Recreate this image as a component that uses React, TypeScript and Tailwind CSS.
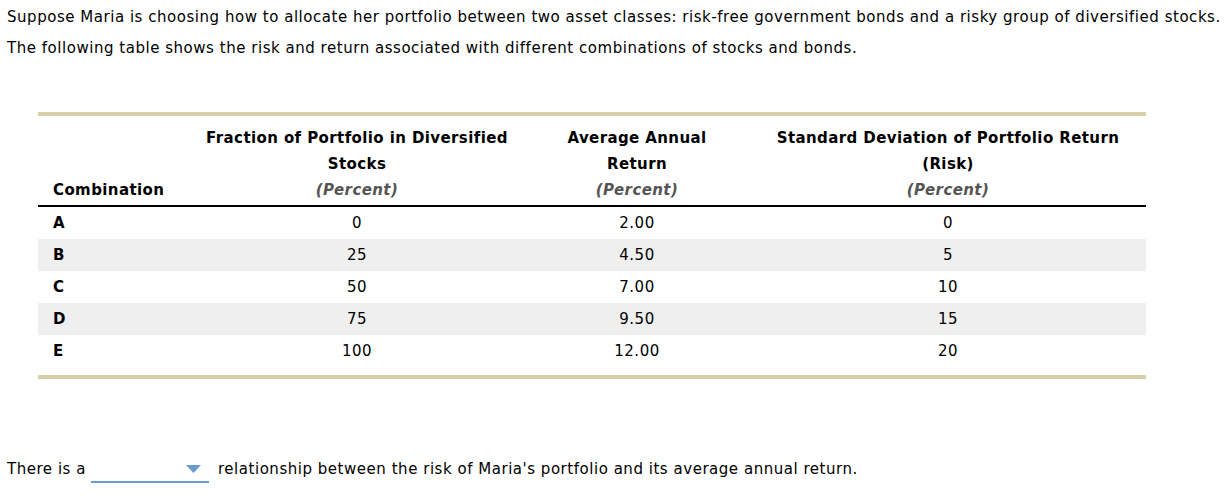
import React from "react";

const rows = [
  ["A", "0", "2.00", "0"],
  ["B", "25", "4.50", "5"],
  ["C", "50", "7.00", "10"],
  ["D", "75", "9.50", "15"],
  ["E", "100", "12.00", "20"],
];

export default function App() {
  return (
    <div className="w-[1228px] h-[496px] bg-white text-black text-[15px] tracking-[0.53px] font-['DejaVu_Sans',Verdana,sans-serif] relative">
      <div className="pl-[7px] pt-[7px]">
        <p className="leading-[20px] h-[20px] whitespace-nowrap">
          Suppose Maria is choosing how to allocate her portfolio between two asset classes: risk-free government bonds and a risky group of diversified stocks.
        </p>
        <p className="leading-[20px] mt-[11px]">
          The following table shows the risk and return associated with different combinations of stocks and bonds.
        </p>
      </div>
      <div className="ml-[38px] mt-[54px] w-[1108px]">
        <div className="h-[4px] bg-[#d8cfa9]" />
        <div className="grid grid-cols-[152px_334px_226px_396px] pt-[9px] pb-[2px] border-b-2 border-black font-bold leading-[26px] tracking-[0.4px]">
          <div className="flex items-end pl-[15px]">Combination</div>
          <div className="text-center">
            Fraction of Portfolio in Diversified<br />Stocks<br />
            <span className="italic text-[#555]">(Percent)</span>
          </div>
          <div className="text-center">
            Average Annual<br />Return<br />
            <span className="italic text-[#555]">(Percent)</span>
          </div>
          <div className="text-center">
            Standard Deviation of Portfolio Return<br />(Risk)<br />
            <span className="italic text-[#555]">(Percent)</span>
          </div>
        </div>
        <div>
          {rows.map((r, i) => (
            <div
              key={r[0]}
              className={`grid grid-cols-[152px_334px_226px_396px] h-[32px] items-center ${i % 2 === 1 ? "bg-[#efefef]" : ""}`}
            >
              <div className="pl-[15px] font-bold">{r[0]}</div>
              <div className="text-center">{r[1]}</div>
              <div className="text-center">{r[2]}</div>
              <div className="text-center">{r[3]}</div>
            </div>
          ))}
        </div>
        <div className="mt-[8px] h-[4px] bg-[#d8cfa9]" />
      </div>
      <div className="flex items-start pl-[7px] mt-[80px]">
        <span className="leading-[20px] whitespace-nowrap">There is a</span>
        <div className="relative ml-[5px] mr-[9px] w-[118px] h-[24px] border-b-2 border-[#6a9bd1]">
          <svg className="absolute right-[8px] top-[6px]" width="15" height="8" viewBox="0 0 15 8">
            <polygon points="0,0 15,0 7.5,8" fill="#6a9bd1" />
          </svg>
        </div>
        <span className="leading-[20px] whitespace-nowrap">relationship between the risk of Maria's portfolio and its average annual return.</span>
      </div>
    </div>
  );
}
